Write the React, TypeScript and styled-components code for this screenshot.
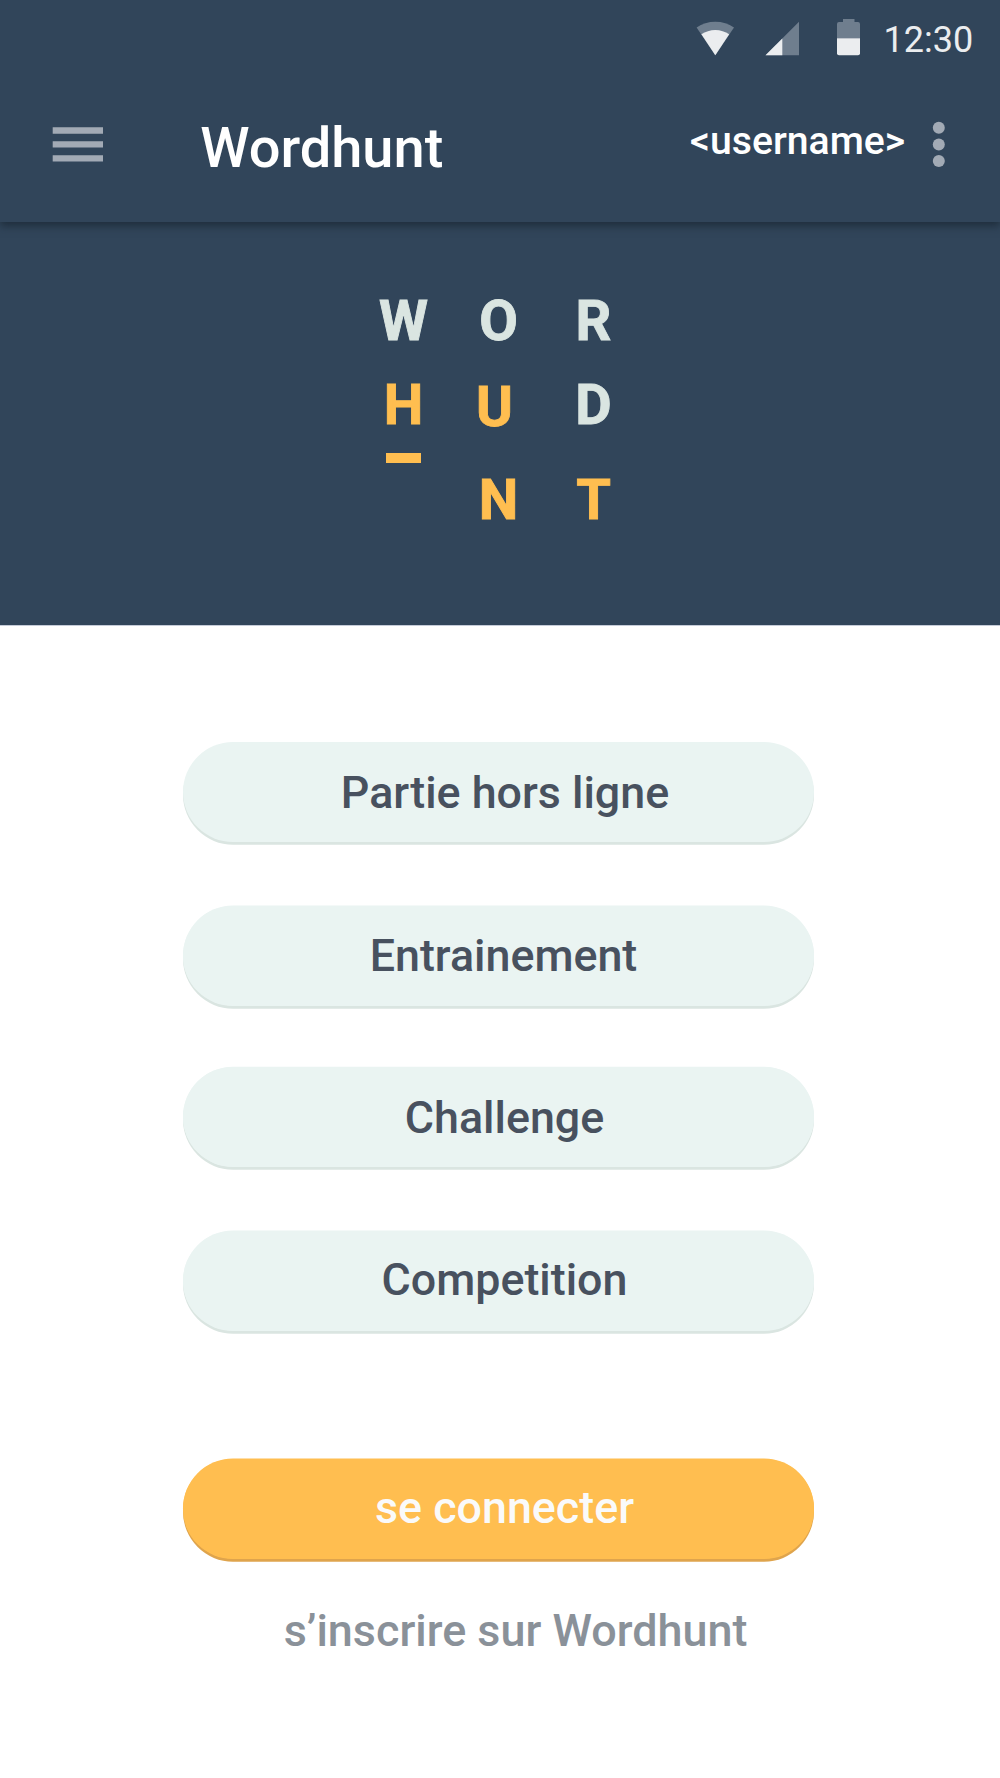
import React from 'react';
import styled, { createGlobalStyle } from 'styled-components';

const color = {
  navy: '#31455a',
  mist: '#eaf4f2',
  mistEdge: '#dae5e1',
  amber: '#ffbe50',
  amberEdge: '#dfa44c',
  slate: '#48515f',
  dim: '#6f7e8e',
  bright: '#ebedef',
  control: '#a2aab5',
};

const Global = createGlobalStyle`
  * { box-sizing: border-box; }
  body { margin: 0; background: #fff; font-family: Roboto, sans-serif; }
`;

const Screen = styled.div`
  display: flex;
  flex-direction: column;
  width: 1000px;
  height: 1778px;
  overflow: hidden;
  background: #fff;
`;

const Header = styled.header`
  position: relative;
  z-index: 1;
  height: 222px;
  background: ${color.navy};
  box-shadow: 0 4px 8px rgba(22, 34, 44, 0.65);
`;

const StatusBar = styled.div`
  display: flex;
  align-items: flex-start;
  height: 80px;
  padding: 19px 0 0 696px;
`;

const StatusIcon = styled.svg<{ $gap: number }>`
  display: block;
  flex: none;
  height: 37px;
  margin-right: ${(p) => p.$gap}px;
`;

const Clock = styled.time`
  font-size: 36px;
  line-height: 42px;
  color: ${color.bright};
`;

const AppBar = styled.div`
  display: flex;
  align-items: flex-start;
  height: 142px;
  padding-left: 52px;
`;

const IconButton = styled.button`
  display: block;
  flex: none;
  margin-top: 40px;
  padding: 0;
  border: 0;
  background: none;
  svg {
    display: block;
  }
`;

const Title = styled.h1`
  width: 489.8px;
  margin: 35px 0 0 96.2px;
  font-size: 56px;
  font-weight: 500;
  line-height: 66px;
  color: #fff;
`;

const Username = styled.span`
  width: 239.4px;
  margin-top: 38px;
  font-size: 39.2px;
  font-weight: 500;
  line-height: 46px;
  color: #fff;
`;

const Hero = styled.section`
  display: flex;
  justify-content: center;
  flex: none;
  height: 404px;
  padding: 69px 3px 0 0;
  background: ${color.navy};
  border-bottom: 1px solid #c5cbd8;
`;

const LetterGrid = styled.div`
  display: grid;
  grid-template-columns: repeat(3, 95px);
  grid-template-rows: 84px 95px 60px;
  justify-items: center;
  align-items: start;
`;

const Letter = styled.span<{ $hot?: boolean; $col: number; $row: number; $dx?: number; $dy?: number }>`
  grid-column: ${(p) => p.$col};
  grid-row: ${(p) => p.$row};
  margin-top: ${(p) => p.$dy ?? 0}px;
  margin-left: ${(p) => p.$dx ?? 0}px;
  font-size: 56px;
  font-weight: 700;
  line-height: 60px;
  color: ${(p) => (p.$hot ? color.amber : color.mistEdge)};
  -webkit-text-stroke: 0.9px currentColor;
`;

const Cursor = styled.i`
  grid-column: 1;
  grid-row: 2;
  width: 35px;
  height: 10px;
  margin-top: 78px;
  background: ${color.amber};
`;

const Menu = styled.main`
  display: flex;
  flex-direction: column;
  width: 631px;
  margin-left: 183px;
  padding-top: 116px;
`;

const PillButton = styled.button<{ $primary?: boolean; $gap?: number; $lead: number; $shift: number; $edge?: number }>`
  display: block;
  width: 100%;
  height: 100px;
  margin: ${(p) => p.$gap ?? 0}px 0 0;
  padding: ${(p) => p.$lead}px 0 0 ${(p) => p.$shift}px;
  border: 0;
  border-radius: 50px;
  background: ${(p) => (p.$primary ? color.amber : color.mist)};
  box-shadow:
    0 -${(p) => p.$edge ?? 0}px 0 ${(p) => (p.$primary ? color.amber : color.mist)},
    0 2.7px 0 ${(p) => (p.$primary ? color.amberEdge : color.mistEdge)};
  font-family: inherit;
  font-size: 44.8px;
  font-weight: 500;
  line-height: 53px;
  text-align: center;
  vertical-align: top;
  color: ${(p) => (p.$primary ? '#fafafa' : color.slate)};
`;

const ButtonText = styled.span`
  display: block;
  height: 100%;
`;

const SignUp = styled.a`
  margin-top: 45px;
  padding-left: 34px;
  font-size: 44.9px;
  font-weight: 500;
  line-height: 53px;
  text-align: center;
  white-space: nowrap;
  color: #8a9199;
`;

const modes = [
  { label: 'Partie hors ligne', gap: 0, lead: 24, shift: 13, edge: 0 },
  { label: 'Entrainement', gap: 64, lead: 23, shift: 10, edge: 0.5 },
  { label: 'Challenge', gap: 61, lead: 24, shift: 12, edge: 0.3 },
  { label: 'Competition', gap: 64, lead: 22, shift: 12, edge: 0.5 },
];

export default function App() {
  return (
    <Screen>
      <Global />
      <Header>
        <StatusBar>
          <StatusIcon $gap={30} width="39" viewBox="0 0 39 37">
            <path d="M19.3 36.3 0.6 8.4C6 4.8 12.4 2.8 19.3 2.8s13.3 2 18.7 5.6z" fill={color.dim} />
            <path d="M19.3 36.3 5.4 15.3C9.4 12.6 14.2 11 19.3 11s9.9 1.6 13.9 4.3z" fill={color.bright} />
          </StatusIcon>
          <StatusIcon $gap={38} width="34" viewBox="0 0 34 37">
            <path d="M0.5 36.2 34 2.7v33.5z" fill={color.dim} />
            <path d="M0.5 36.2 17.3 19.4v16.8z" fill={color.bright} />
          </StatusIcon>
          <StatusIcon $gap={23.6} width="23" viewBox="0 0 23 37">
            <path d="M6 0h11.5v3H21a2 2 0 0 1 2 2v14.3H0V5a2 2 0 0 1 2-2h4z" fill={color.dim} />
            <path d="M0 19.3h23v15a2 2 0 0 1-2 2H2a2 2 0 0 1-2-2z" fill={color.bright} />
          </StatusIcon>
          <Clock>12:30</Clock>
        </StatusBar>
        <AppBar>
          <IconButton aria-label="Menu">
            <svg width="52" height="48" viewBox="0 0 52 48" fill={color.control}>
              <path d="M.7 7.3H51v6.4H.7zM.7 21.2H51v6.3H.7zM.7 35.2H51v6.4H.7z" />
            </svg>
          </IconButton>
          <Title>Wordhunt</Title>
          <Username>&lt;username&gt;</Username>
          <IconButton aria-label="Options">
            <svg width="20" height="48" viewBox="0 0 20 48" fill={color.control}>
              <circle cx="9.8" cy="7.7" r="6" />
              <circle cx="9.8" cy="24.4" r="6" />
              <circle cx="9.8" cy="41" r="6" />
            </svg>
          </IconButton>
        </AppBar>
      </Header>
      <Hero>
        <LetterGrid>
          <Letter $col={1} $row={1}>W</Letter>
          <Letter $col={2} $row={1}>O</Letter>
          <Letter $col={3} $row={1}>R</Letter>
          <Letter $col={1} $row={2} $hot>H</Letter>
          <Cursor />
          <Letter $col={2} $row={2} $hot $dx={-8} $dy={2}>U</Letter>
          <Letter $col={3} $row={2}>D</Letter>
          <Letter $col={2} $row={3} $hot>N</Letter>
          <Letter $col={3} $row={3} $hot>T</Letter>
        </LetterGrid>
      </Hero>
      <Menu>
        {modes.map((m) => (
          <PillButton key={m.label} $gap={m.gap} $lead={m.lead} $shift={m.shift} $edge={m.edge}>
            <ButtonText>{m.label}</ButtonText>
          </PillButton>
        ))}
        <PillButton $primary $gap={128} $lead={22} $shift={12} $edge={0.5}>
          <ButtonText>se connecter</ButtonText>
        </PillButton>
        <SignUp>s’inscrire sur Wordhunt</SignUp>
      </Menu>
    </Screen>
  );
}
